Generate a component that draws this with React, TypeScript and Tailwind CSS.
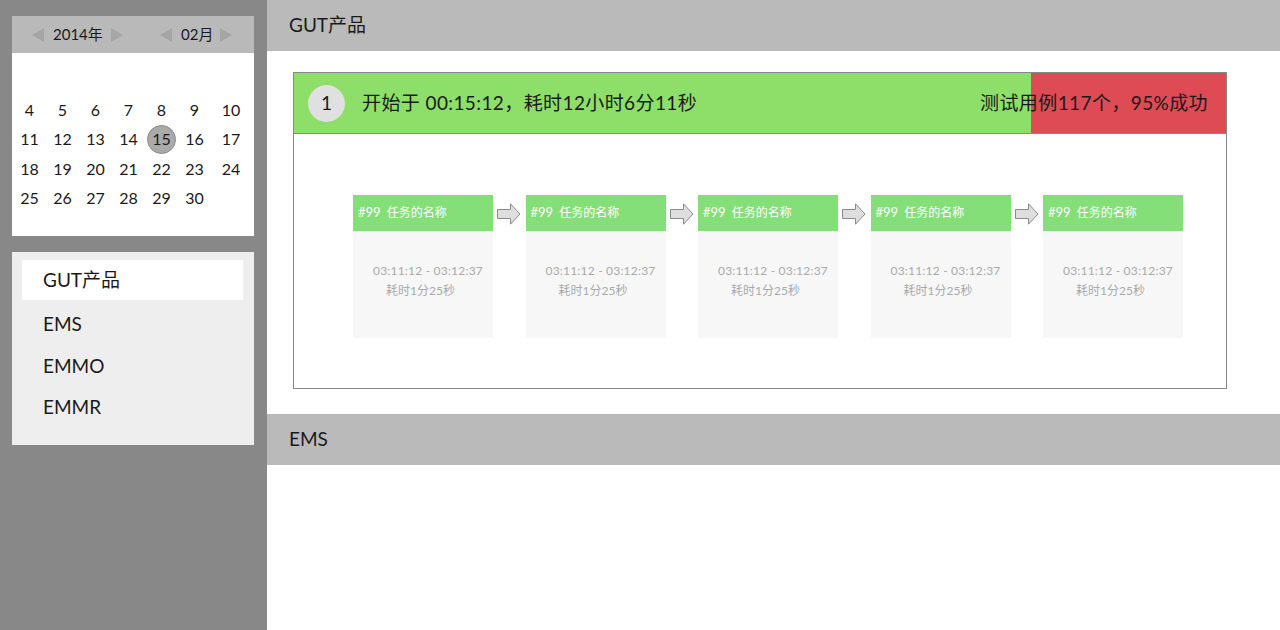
import React from 'react'

const font = { fontFamily: 'Lato, "Noto Sans CJK SC", sans-serif' }

const weeks = [
  ['4', '5', '6', '7', '8', '9', '10'],
  ['11', '12', '13', '14', '15', '16', '17'],
  ['18', '19', '20', '21', '22', '23', '24'],
  ['25', '26', '27', '28', '29', '30', ''],
]

const menu = [
  { name: 'GUT产品', cls: 'h-[40px] bg-white' },
  { name: 'EMS', cls: 'mt-[3px] h-[42px]' },
  { name: 'EMMO', cls: 'h-[42px]' },
  { name: 'EMMR', cls: 'h-[40px]' },
]

function TriLeft() {
  return (
    <svg width="12" height="14" viewBox="0 0 12 14">
      <path d="M12 0 L0 7 L12 14 Z" fill="#a6a6a6" />
    </svg>
  )
}

function TriRight() {
  return (
    <svg width="12" height="14" viewBox="0 0 12 14">
      <path d="M0 0 L12 7 L0 14 Z" fill="#a6a6a6" />
    </svg>
  )
}

function StepArrow() {
  return (
    <svg width="24" height="22" viewBox="0 0 24 22">
      <path d="M0.5 6.5 H13.5 V0.8 L23 11 L13.5 21.2 V15.5 H0.5 Z" fill="#dedede" stroke="#8a8a8a" strokeWidth="1" />
    </svg>
  )
}

function Step() {
  return (
    <div className="w-[140px] h-[143px] shrink-0 flex flex-col bg-[#f7f7f7]">
      <div className="h-[36px] bg-[#84df78] flex items-center pl-[5px] text-[13px] text-white">
        <span>#99</span>
        <span className="ml-[6px] text-[12px]">任务的名称</span>
      </div>
      <div className="flex flex-col items-center pt-[30px] text-[12px] leading-[20px] text-[#aaaaaa]">
        <span className="pl-[10px] tracking-[0.2px]">03:11:12 - 03:12:37</span>
        <span className="pr-[5px]">耗时1分25秒</span>
      </div>
    </div>
  )
}

export default function App() {
  return (
    <div className="flex w-[1280px] h-[630px] overflow-hidden bg-white text-[#1a1a1a]" style={font}>
      {/* ── Sidebar ─── */}
      <aside className="w-[267px] shrink-0 bg-[#888888] pt-[16px] px-[12px] pr-[13px]">
        <div className="bg-white h-[220px]">
          <div className="h-[37px] bg-[#b9b9b9] flex items-center text-[15px]">
            <div className="ml-[20px]"><TriLeft /></div>
            <span className="ml-[9px] w-[58px]">2014年</span>
            <TriRight />
            <div className="ml-[37px]"><TriLeft /></div>
            <span className="ml-[9px] w-[39px]">02月</span>
            <TriRight />
          </div>
          <div className="pt-[42px] pl-[1px]">
            {weeks.map((row, r) => (
              <div key={r} className="grid grid-cols-[33px_33px_33px_33px_33px_33px_40px] h-[29.5px] items-center text-[16px]">
                {row.map((d, i) => (
                  <div key={i} className="flex justify-center">
                    {d === '15' ? (
                      <span className="w-[29px] h-[29px] rounded-full bg-[#aaaaaa] border border-[#8a8a8a] flex items-center justify-center">
                        {d}
                      </span>
                    ) : (
                      <span>{d}</span>
                    )}
                  </div>
                ))}
              </div>
            ))}
          </div>
        </div>

        <div className="mt-[16px] bg-[#eeeeee] h-[193px] pt-[8px] px-[10px] pr-[11px]">
          {menu.map((m) => (
            <div key={m.name} className={`${m.cls} flex items-center pl-[21px] text-[19px]`}>
              {m.name}
            </div>
          ))}
        </div>
      </aside>

      {/* ── Main ─── */}
      <main className="flex-1 flex flex-col">
        <div className="h-[51px] bg-[#bababa] flex items-center pl-[22px] text-[19px]">GUT产品</div>

        <div className="pt-[21px] pl-[26px] pr-[53px] pb-[25px]">
          <div className="border border-[#888888] h-[317px]">
            <div className="relative h-[61px] bg-[#8ddf69] flex items-center border-b border-[#888888]">
              <div className="absolute right-0 top-0 bottom-0 w-[195px] bg-[#de4b55]" />
              <div className="relative ml-[14px] w-[37px] h-[37px] rounded-full bg-[#e0e0e0] flex items-center justify-center text-[19px]">1</div>
              <span className="relative ml-[17px] text-[19px] tracking-[0.4px]">开始于 00:15:12，耗时12小时6分11秒</span>
              <span className="relative ml-auto mr-[18px] text-[19px] tracking-[0.4px]">测试用例117个，95%成功</span>
            </div>

            <div className="flex items-start pt-[61px] pl-[59px]">
              {[0, 1, 2, 3, 4].map((i) => (
                <React.Fragment key={i}>
                  {i > 0 && (
                    <div className="w-[32.5px] shrink-0 flex justify-center pt-[8px]">
                      <StepArrow />
                    </div>
                  )}
                  <Step />
                </React.Fragment>
              ))}
            </div>
          </div>
        </div>

        <div className="h-[51px] bg-[#bababa] flex items-center pl-[22px] text-[19px]">EMS</div>
      </main>
    </div>
  )
}
